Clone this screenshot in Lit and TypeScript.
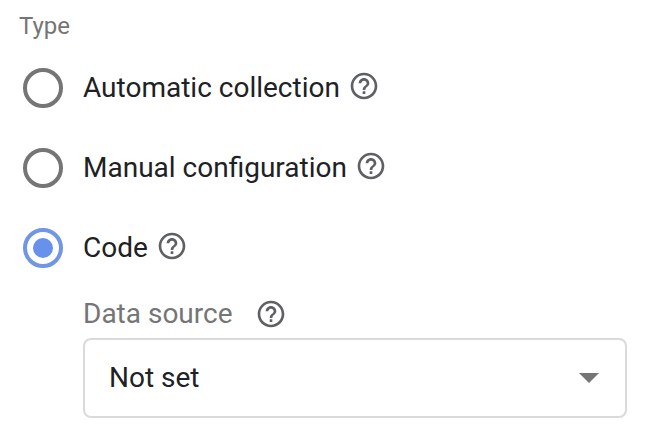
import { LitElement, html, css } from "lit";
import { customElement, property, state } from "lit/decorators.js";

@customElement("help-button")
class HelpButton extends LitElement {
  @property() topic = "";

  static styles = css`
    :host {
      display: block;
      flex: none;
      height: 32px;
    }
    .help {
      display: block;
      width: 32px;
      height: 32px;
      padding: 0;
      border: 0;
      border-radius: 50%;
      background: none;
      color: #5f6063;
      cursor: pointer;
    }
    .icon {
      display: block;
      width: 32px;
      height: 32px;
      fill: currentColor;
    }
  `;

  render() {
    return html`
      <button class="help" type="button" aria-label="Help: ${this.topic}">
        <svg class="icon" viewBox="0 0 24 24" aria-hidden="true">
          <path
            d="M11 18h2v-2h-2v2zm1-16C6.480 2 2 6.480 2 12s4.480 10 10 10 10-4.480 10-10S17.520 2 12 2zm0 18c-4.410 0-8-3.590-8-8s3.590-8 8-8 8 3.590 8 8-3.590 8-8 8zm0-14c-2.210 0-4 1.790-4 4h2c0-1.100.9-2 2-2s2 .9 2 2c0 2-3 1.750-3 5h2c0-2.250 3-2.500 3-5 0-2.210-1.790-4-4-4z"
          />
        </svg>
      </button>
    `;
  }
}

@customElement("app-root")
class AppRoot extends LitElement {
  @state() private type = "code";

  private options = [
    { value: "automatic", label: "Automatic collection" },
    { value: "manual", label: "Manual configuration" },
    { value: "code", label: "Code" },
  ];

  static styles = css`
    :host {
      display: block;
      min-height: 100vh;
      box-sizing: border-box;
      padding: 8px 19px 24px;
      background: #fff;
      color: #202124;
      font: 28px/36px Roboto, "Liberation Sans", sans-serif;
    }
    .group {
      margin: 0;
      padding: 0;
      border: 0;
      min-width: 0;
    }
    .heading {
      padding: 0;
      color: #757575;
      font-size: 24px;
    }
    .options {
      display: grid;
      gap: 40px;
      padding: 24px 0 0 4px;
    }
    .row {
      display: flex;
      align-items: center;
      gap: 8px;
      height: 40px;
    }
    .row help-button {
      padding-bottom: 4px;
    }
    .choice {
      display: flex;
      align-items: center;
      gap: 20px;
      cursor: pointer;
    }
    .radio {
      appearance: none;
      flex: none;
      display: grid;
      place-items: center;
      box-sizing: border-box;
      width: 40px;
      height: 40px;
      margin: 0;
      border: 4px solid #757575;
      border-radius: 50%;
      cursor: pointer;
    }
    .radio:checked {
      border-color: #7096e4;
    }
    .radio:checked::before {
      content: "";
      width: 20px;
      height: 20px;
      border-radius: 50%;
      background: #6791ea;
    }
    .source {
      padding: 28px 0 0 64px;
    }
    .caption {
      display: flex;
      align-items: center;
      gap: 22px;
      padding-bottom: 6px;
      color: #757575;
    }
    .field {
      display: grid;
      align-items: center;
    }
    .select,
    .arrow {
      grid-area: 1 / 1;
    }
    .select {
      appearance: none;
      box-sizing: border-box;
      width: 100%;
      height: 80px;
      margin: 0;
      padding: 0 64px 0 24px;
      border: 2px solid #dadada;
      border-radius: 8px;
      background: #fff;
      color: inherit;
      font: inherit;
    }
    .arrow {
      justify-self: end;
      width: 20px;
      height: 10px;
      margin-right: 28px;
      fill: #757575;
      pointer-events: none;
    }
  `;

  render() {
    return html`
      <fieldset class="group">
        <legend class="heading">Type</legend>
        <div class="options">
          ${this.options.map(
            (o) => html`
              <div class="row">
                <label class="choice">
                  <input
                    class="radio"
                    type="radio"
                    name="type"
                    .value=${o.value}
                    .checked=${this.type === o.value}
                    @change=${() => (this.type = o.value)}
                  />
                  <span>${o.label}</span>
                </label>
                <help-button topic=${o.label}></help-button>
              </div>
            `
          )}
        </div>
      </fieldset>
      <div class="source">
        <div class="caption">
          <label for="source">Data source</label>
          <help-button topic="Data source"></help-button>
        </div>
        <div class="field">
          <select class="select" id="source">
            <option>Not set</option>
          </select>
          <svg class="arrow" viewBox="0 0 20 10" aria-hidden="true">
            <path d="M0 0h20L10 10z" />
          </svg>
        </div>
      </div>
    `;
  }
}
